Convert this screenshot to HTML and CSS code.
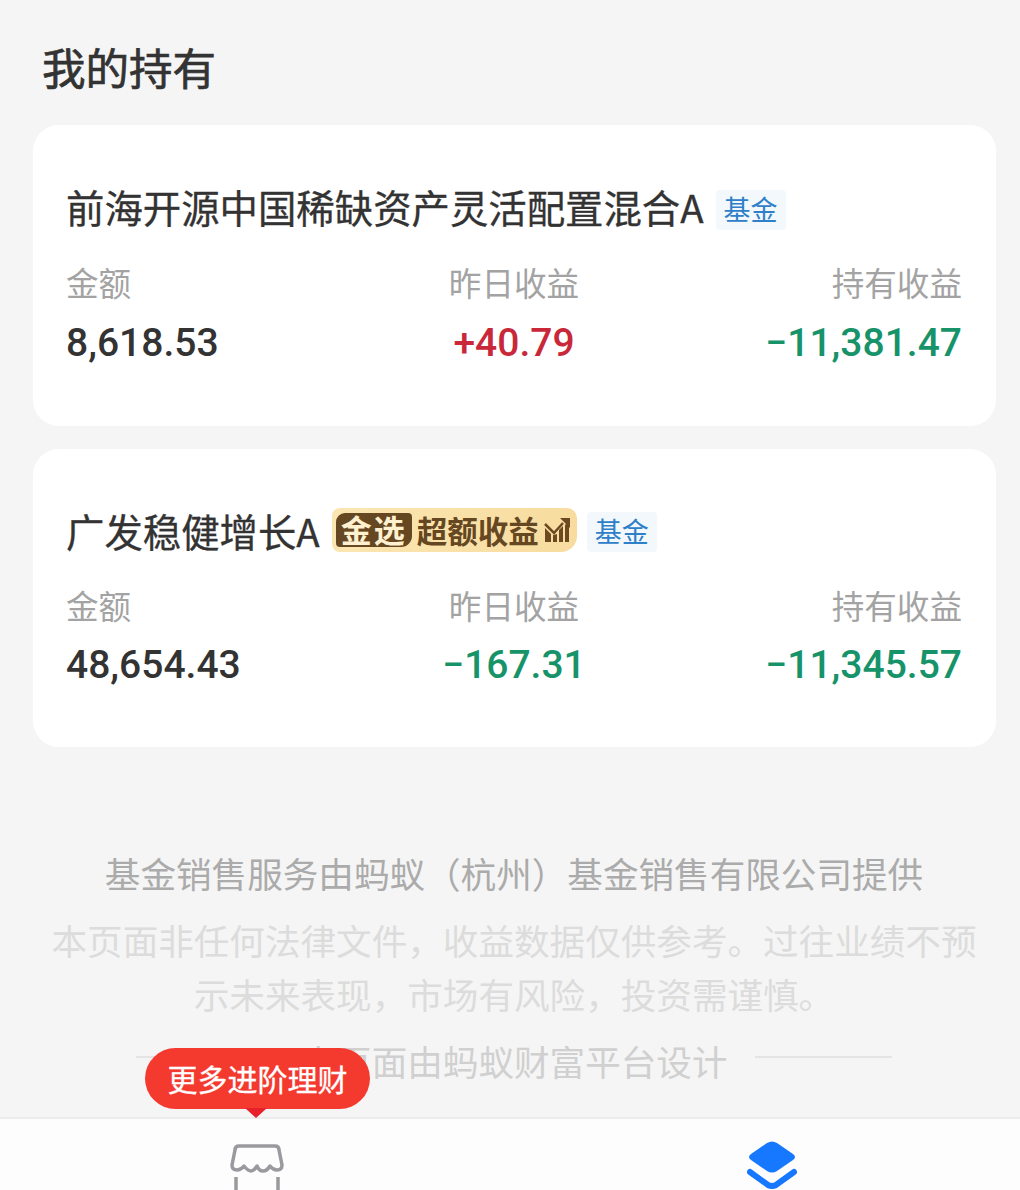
FILE: index.html
```html
<!DOCTYPE html>
<html lang="zh-CN">
<head>
  <meta charset="UTF-8">
  <title>我的持有</title>
  <link rel="stylesheet" href="styles.css">
</head>
<body>
  <div class="page">
    <h1 class="page-title">我的持有</h1>

    <div class="card">
      <div class="card-title">
        <span>前海开源中国稀缺资产灵活配置混合A</span>
        <span class="tag">基金</span>
      </div>
      <div class="stats">
        <div class="stat">
          <div class="stat-label">金额</div>
          <div class="stat-value">8,618.53</div>
        </div>
        <div class="stat stat-mid">
          <div class="stat-label">昨日收益</div>
          <div class="stat-value up">+40.79</div>
        </div>
        <div class="stat stat-end">
          <div class="stat-label">持有收益</div>
          <div class="stat-value down">−11,381.47</div>
        </div>
      </div>
    </div>

    <div class="card">
      <div class="card-title">
        <span>广发稳健增长A</span>
        <span class="gold-badge">
          <span class="gold-mark">金选</span>
          <span class="gold-text">超额收益</span>
          <svg class="gold-icon" width="26" height="26" viewBox="0 0 26 26">
            <path d="M1 25V11l6 6v8zM9 25v-7l4-1v8zM15 25V13l4-4v16zM21 25V8l4-4v21z" fill="#6b4a22"/>
            <path d="M1 7l9 9 9-10" fill="none" stroke="#6b4a22" stroke-width="2.500"/>
            <path d="M16 1h10v10z" fill="#6b4a22"/>
          </svg>
        </span>
        <span class="tag tag-after-badge">基金</span>
      </div>
      <div class="stats">
        <div class="stat">
          <div class="stat-label">金额</div>
          <div class="stat-value">48,654.43</div>
        </div>
        <div class="stat stat-mid">
          <div class="stat-label">昨日收益</div>
          <div class="stat-value down">−167.31</div>
        </div>
        <div class="stat stat-end">
          <div class="stat-label">持有收益</div>
          <div class="stat-value down">−11,345.57</div>
        </div>
      </div>
    </div>

    <div class="footer">
      <p class="provider">基金销售服务由蚂蚁（杭州）基金销售有限公司提供</p>
      <p class="disclaimer">本页面非任何法律文件，收益数据仅供参考。过往业绩不预示未来表现，市场有风险，投资需谨慎。</p>
      <div class="design-row">
        <span class="design-line"></span>
        <span class="design-text">本页面由蚂蚁财富平台设计</span>
        <span class="design-line"></span>
      </div>
    </div>

    <div class="tabbar">
      <div class="tab">
        <svg width="54" height="72" viewBox="0 0 54 72">
          <path d="M9 2h36q4 0 4 4l3 15q0 5-5 5-4 0-7-4-3 5-7 5t-6-5q-3 5-6 5t-7-5q-3 4-7 4-5 0-5-5L5 6q0-4 4-4z" fill="none" stroke="#9a9a9e" stroke-width="3.500" stroke-linejoin="round"/>
          <path d="M6 33v30M48 33v30" fill="none" stroke="#9a9a9e" stroke-width="3.500"/>
        </svg>
      </div>
      <div class="tab tab-active">
        <svg width="50" height="72" viewBox="0 0 50 72">
          <path d="M20 3q5-3 10 0l16 11q4 3 0 6l-16 11q-5 3-10 0L4 20q-4-3 0-6z" fill="#1677ff"/>
          <path d="M3 32l18 13q4 2 8 0l18-13" fill="none" stroke="#1677ff" stroke-width="6" stroke-linecap="round"/>
        </svg>
      </div>
    </div>

    <div class="tooltip">更多进阶理财</div>
  </div>
</body>
</html>
```

FILE: styles.css
```css
* {
  box-sizing: border-box;
}

html, body {
  margin: 0;
  padding: 0;
}

body {
  font-family: "Noto Sans CJK SC", "Noto Sans", sans-serif;
  background-color: #f5f5f5;
}

.page {
  position: relative;
  height: 1190px;
  overflow: hidden;
  display: flex;
  flex-direction: column;
  padding-top: 35px;
}

.page-title {
  margin: 0 0 27px 42px;
  font-size: 43.5px;
  line-height: 63px;
  font-weight: 400;
  -webkit-text-stroke: 0.7px #333;
  color: #333;
}

.card {
  margin: 0 24px 23px 33px;
  padding: 55px 34px 0 33px;
  height: 301px;
  background-color: #fff;
  border-radius: 26px;
}

.card + .card {
  height: 298px;
}

.card-title {
  display: flex;
  align-items: center;
  gap: 12px;
  height: 52px;
  font-size: 38.4px;
  color: #333;
  -webkit-text-stroke: 0.3px #333;
  white-space: nowrap;
}

.tag {
  display: inline-block;
  margin-top: 7px;
  padding: 0 8px;
  height: 40px;
  line-height: 38px;
  font-size: 27px;
  color: #2f80c8;
  -webkit-text-stroke: 0;
  background-color: #f3f8fc;
  border-radius: 4px;
}

.tag-after-badge {
  margin-top: 3px;
  margin-left: -2px;
}

.gold-badge {
  display: inline-flex;
  align-items: center;
  height: 44px;
  padding: 0 7px 0 4px;
  gap: 5px;
  background: linear-gradient(90deg, #fbe6b2, #f8dc9f);
  border-radius: 8px 10px 16px 8px;
  -webkit-text-stroke: 0;
}

.gold-mark {
  display: inline-block;
  height: 34px;
  padding: 0 5px;
  line-height: 32px;
  font-size: 31px;
  letter-spacing: 2px;
  font-weight: 700;
  color: #fff0cf;
  background-color: #654722;
  border-radius: 9px 4px 11px 4px;
}

.gold-text {
  font-size: 30.500px;
  font-weight: 700;
  color: #654722;
}

.stats {
  display: flex;
  justify-content: space-between;
  margin-top: 28px;
}

.card + .card .stats {
  margin-top: 27px;
}

.stat {
  width: 33.33%;
}

.stat-mid {
  text-align: center;
}

.stat-end {
  text-align: right;
}

.stat-label {
  font-size: 32.600px;
  line-height: 44px;
  color: #a3a3a3;
}

.stat-value {
  margin-top: 13px;
  font-family: Roboto, "Liberation Sans", sans-serif;
  font-size: 39px;
  font-weight: 500;
  line-height: 52px;
  color: #333;
}

.card + .card .stat-value {
  margin-top: 12px;
}

.stat-value.up {
  color: #c8283a;
}

.stat-value.down {
  color: #17936a;
}

.footer {
  margin-top: 77px;
  padding: 0 40px 0 48px;
  text-align: center;
  font-size: 35.6px;
}

.provider {
  margin: 0;
  line-height: 52px;
  color: #ababab;
}

.disclaimer {
  margin: 14px 0 0;
  line-height: 54px;
  color: #dcdcdc;
}

.design-row {
  display: flex;
  align-items: center;
  justify-content: center;
  gap: 28px;
  margin-top: 14px;
  line-height: 52px;
  color: #d0d0d0;
}

.design-line {
  width: 137px;
  height: 2px;
  margin-bottom: 8px;
  background-color: #e4e4e4;
}

.tabbar {
  position: absolute;
  left: 0;
  right: 0;
  top: 1117px;
  height: 73px;
  display: flex;
  background-color: #fdfdfe;
  border-top: 2px solid #ececec;
  overflow: hidden;
}

.tab {
  width: 50%;
  padding-top: 25px;
  padding-left: 4px;
  text-align: center;
}

.tab-active {
  padding-top: 21px;
  padding-left: 14px;
}

.tooltip {
  position: absolute;
  left: 145px;
  top: 1048px;
  width: 225px;
  height: 61px;
  line-height: 60px;
  text-align: center;
  font-size: 30px;
  -webkit-text-stroke: 0.3px #fff;
  color: #fff;
  background-color: #f4392f;
  border-radius: 31px;
}

.tooltip::after {
  content: "";
  position: absolute;
  left: 100px;
  top: 60px;
  border-left: 11px solid transparent;
  border-right: 11px solid transparent;
  border-top: 10px solid #e8202a;
}
```
